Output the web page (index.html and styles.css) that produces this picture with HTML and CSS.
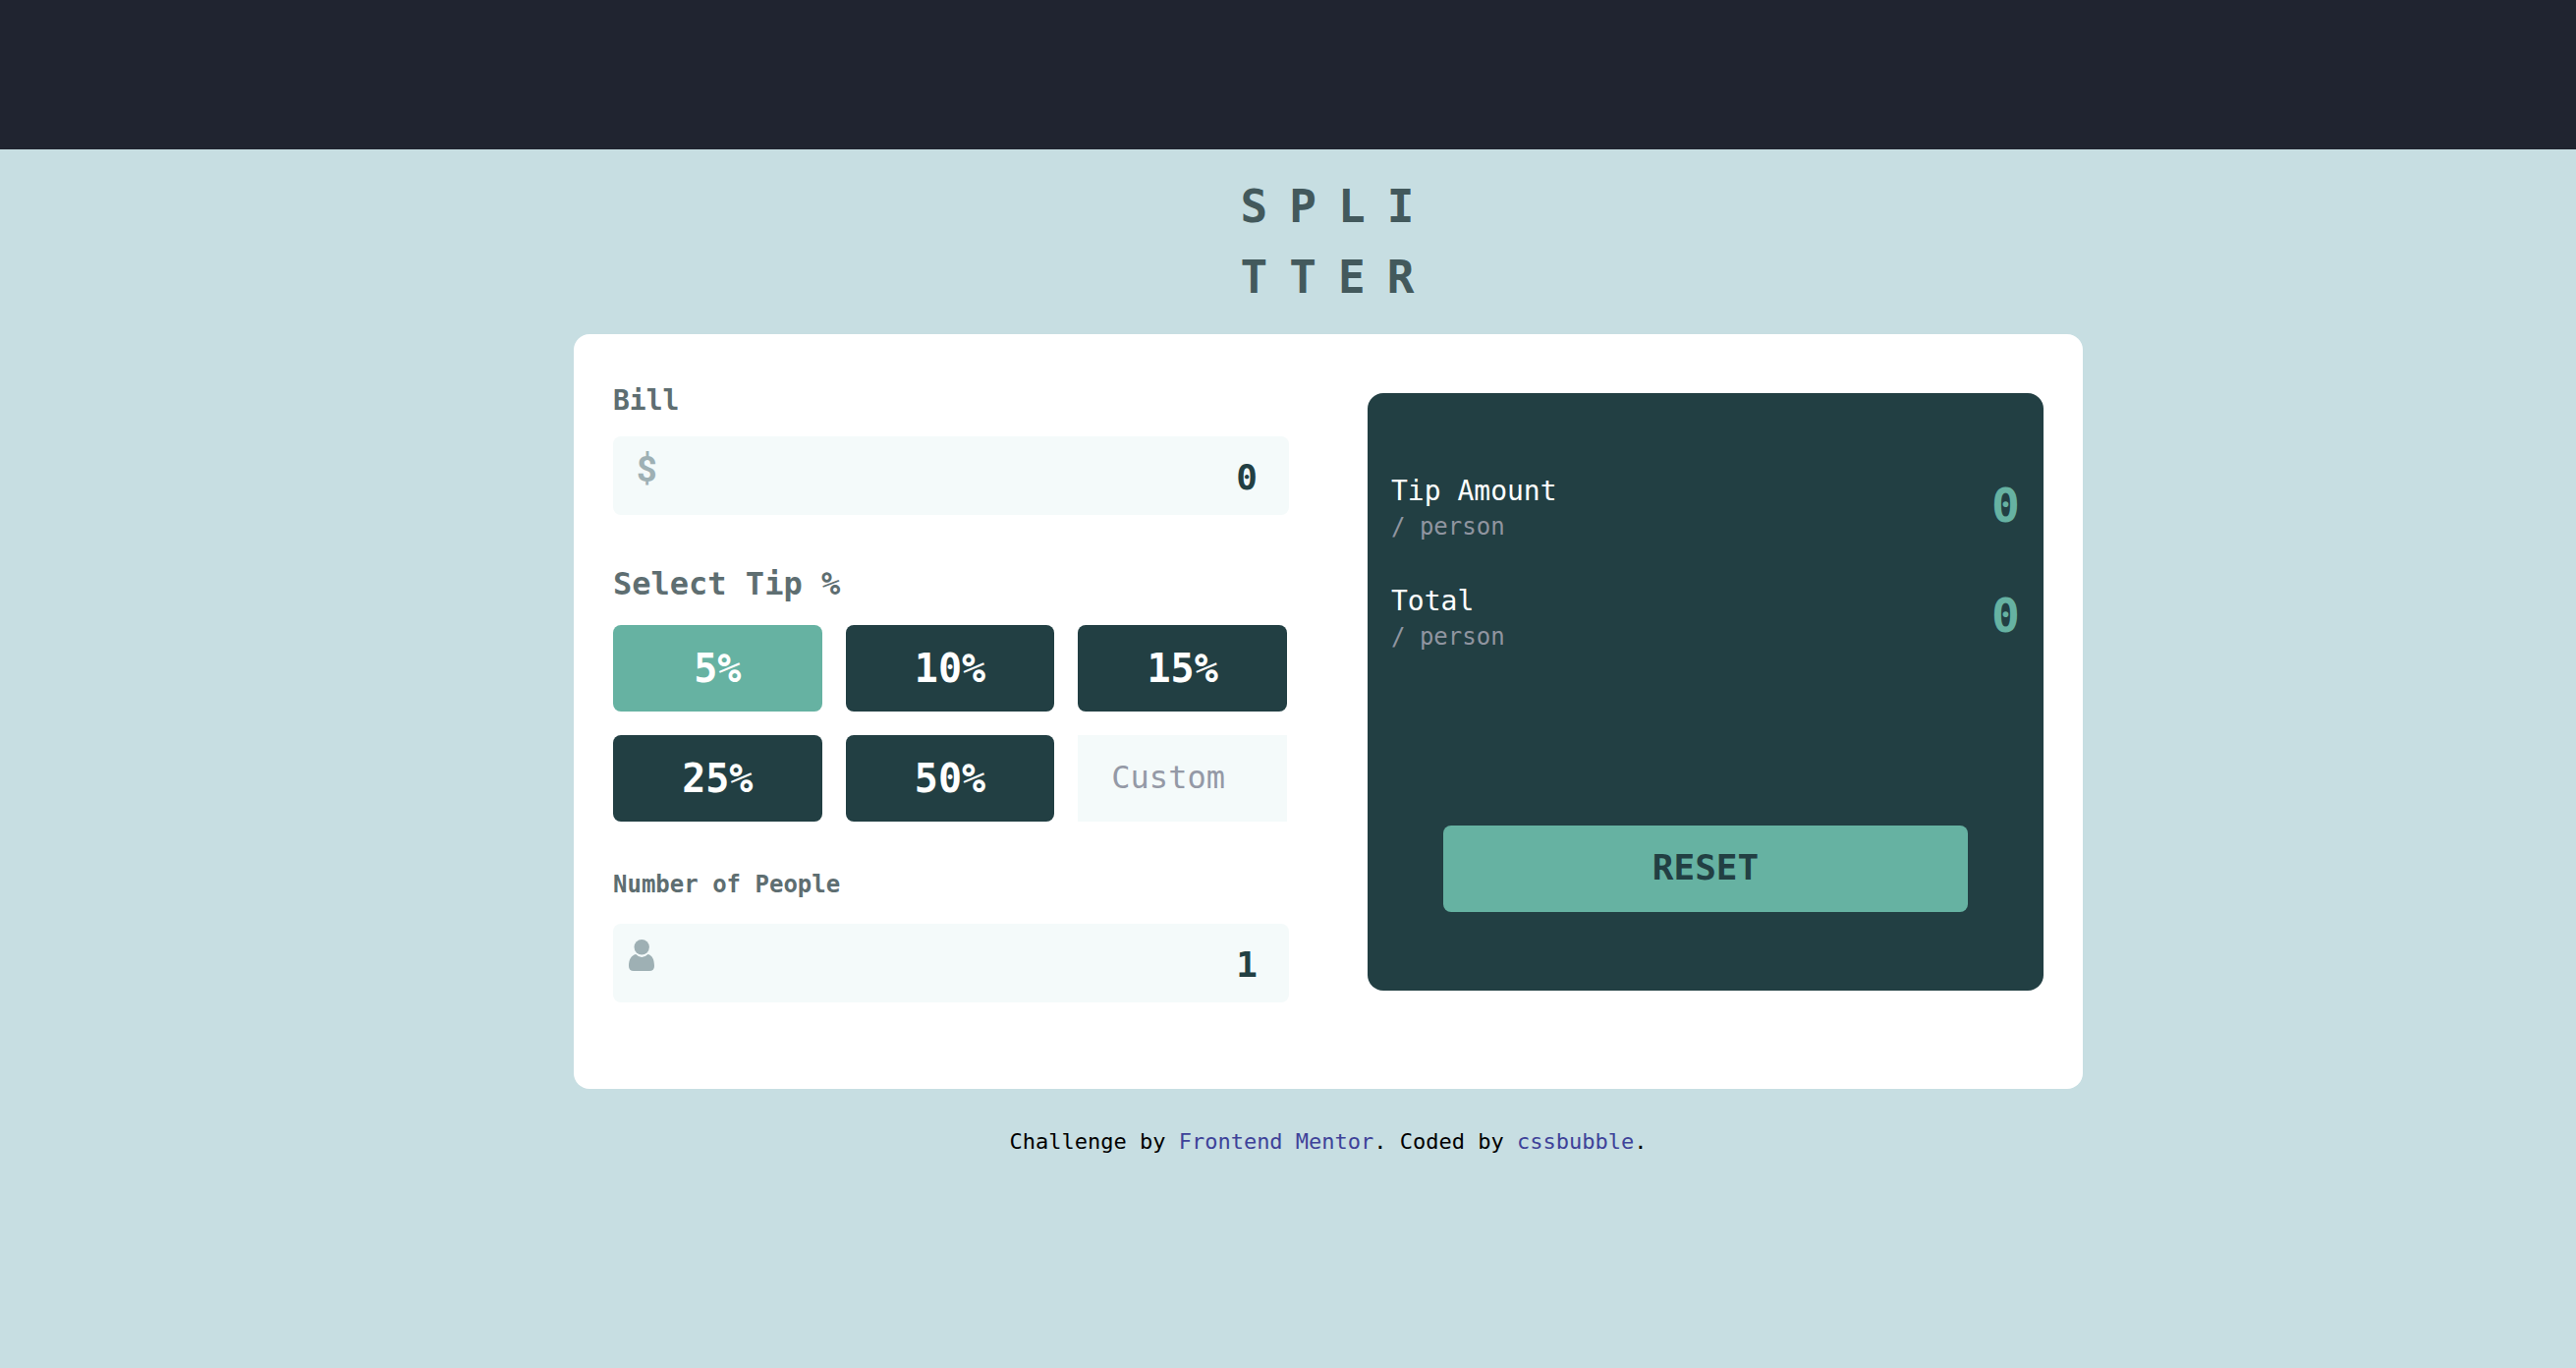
FILE: index.html
```html
<!DOCTYPE html>
<html lang="en">
<head>
<meta charset="utf-8">
<meta name="viewport" content="width=device-width, initial-scale=1">
<title>Splitter | Tip calculator</title>
<link rel="stylesheet" href="styles.css">
</head>
<body>
<div class="topbar"></div>
<div class="page">
  <h1 class="logo">SPLI<br>TTER</h1>
  <main class="card">
    <form class="form">
      <label class="label label-bill" for="bill">Bill</label>
      <div class="field">
        <span class="field-icon dollar" aria-hidden="true">$</span>
        <input class="field-input" id="bill" type="text" inputmode="decimal" value="0">
      </div>
      <fieldset class="tips">
        <legend class="label label-tip">Select Tip %</legend>
        <div class="tip-grid">
          <button class="tip tip-active" type="button">5%</button>
          <button class="tip" type="button">10%</button>
          <button class="tip" type="button">15%</button>
          <button class="tip" type="button">25%</button>
          <button class="tip" type="button">50%</button>
          <input class="tip-custom" type="text" placeholder="Custom" aria-label="Custom">
        </div>
      </fieldset>
      <label class="label label-people" for="people">Number of People</label>
      <div class="field">
        <svg class="field-icon person" viewBox="0 0 26 32" aria-hidden="true"><circle cx="13.200" cy="7.700" r="7.700"/><path d="M7.200 15Q10 18 13.200 18Q16.500 18 19.500 15C24 16 26 20.500 26 27Q26 32 21 32H5Q0 32 0 27C0 20.500 2.500 16 7.200 15Z"/></svg>
        <input class="field-input" id="people" type="text" inputmode="numeric" value="1">
      </div>
    </form>
    <section class="summary">
      <div class="result">
        <div><p class="result-name">Tip Amount</p><p class="result-unit">/ person</p></div>
        <output class="result-value">0</output>
      </div>
      <div class="result">
        <div><p class="result-name">Total</p><p class="result-unit">/ person</p></div>
        <output class="result-value">0</output>
      </div>
      <button class="reset" type="button">RESET</button>
    </section>
  </main>
  <footer class="credit">Challenge by <a href="#">Frontend Mentor</a>. Coded by <a href="#">cssbubble</a>.</footer>
</div>
</body>
</html>
```
FILE: styles.css
```css
:root {
  --dark: #223f43;
  --green: #66b2a2;
  --pale: #f4fafa;
  --mono: "DejaVu Sans Mono", monospace;
}

* {
  box-sizing: border-box;
}

body {
  margin: 0;
  min-height: 100vh;
  background: #c7dee2;
  font-family: var(--mono);
}

h1,
p {
  margin: 0;
}

button,
input {
  border: 0;
  font-family: inherit;
}

.topbar {
  height: 152px;
  background: #202430;
}

.page {
  display: flex;
  flex-direction: column;
  align-items: center;
  padding: 22px 0 40px 82px;
}

.logo {
  padding-left: 20px;
  margin-bottom: 22px;
  color: #43595c;
  font: bold 46px/72px var(--mono);
  letter-spacing: 22px;
}

.card {
  display: grid;
  grid-template-columns: 1fr 1fr;
  align-items: start;
  gap: 80px;
  width: 100%;
  max-width: 1536px;
  padding: 48px 40px 88px;
  border-radius: 16px;
  background: #fff;
}

.label {
  display: block;
  padding: 0;
  color: #5e6e71;
  font-weight: bold;
}

.label-bill {
  margin-bottom: 16px;
  font-size: 28px;
  line-height: 40px;
}

.label-tip {
  padding-top: 2px;
  font-size: 32px;
  line-height: 40px;
}

.label-people {
  margin: 48px 0 24px;
  font-size: 24px;
  line-height: 32px;
}

.field {
  position: relative;
}

.field-input {
  display: block;
  width: 100%;
  height: 80px;
  padding: 2px 32px 0 64px;
  border-radius: 8px;
  background: var(--pale);
  color: var(--dark);
  font-size: 36px;
  font-weight: bold;
  text-align: right;
}

.field-icon {
  position: absolute;
  top: 16px;
  left: 16px;
  color: #9eb0b4;
  fill: #9eb0b4;
}

.person {
  width: 26px;
  height: 32px;
}

.dollar {
  left: 24px;
  font: bold 36px/36px Roboto, sans-serif;
}

.tips {
  min-width: 0;
  margin: 48px 0 0;
  padding: 0 2px 0 0;
  border: 0;
}

.tip-grid {
  display: grid;
  grid-template-columns: repeat(3, 1fr);
  gap: 24px;
  padding-top: 22px;
}

.tip {
  height: 88px;
  border-radius: 8px;
  background: var(--dark);
  color: #fff;
  font-size: 40px;
  font-weight: bold;
}

.tip-active {
  background: var(--green);
}

.tip-custom {
  width: 100%;
  min-width: 0;
  height: 88px;
  padding: 0 34px 2px;
  background: var(--pale);
  font-size: 32px;
}

.tip-custom::placeholder {
  color: #9499a6;
}

.summary {
  display: flex;
  flex-direction: column;
  gap: 40px;
  margin-top: 12px;
  padding: 80px 24px;
  border-radius: 16px;
  background: var(--dark);
}

.result {
  display: flex;
  align-items: center;
  justify-content: space-between;
}

.result-name {
  color: #fff;
  font-size: 28px;
  line-height: 40px;
}

.result-unit {
  color: #9095a0;
  font-size: 24px;
  line-height: 32px;
}

.result-value {
  padding-bottom: 4px;
  color: var(--green);
  font-size: 48px;
  font-weight: bold;
  line-height: 56px;
}

.reset {
  align-self: center;
  width: 100%;
  max-width: 534px;
  height: 88px;
  margin-top: 136px;
  padding-bottom: 4px;
  border-radius: 8px;
  background: var(--green);
  color: var(--dark);
  font-size: 36px;
  font-weight: bold;
}

.credit {
  margin-top: 38px;
  font-size: 22px;
  line-height: 32px;
}

.credit a {
  color: #3e4299;
  text-decoration: none;
}
```
